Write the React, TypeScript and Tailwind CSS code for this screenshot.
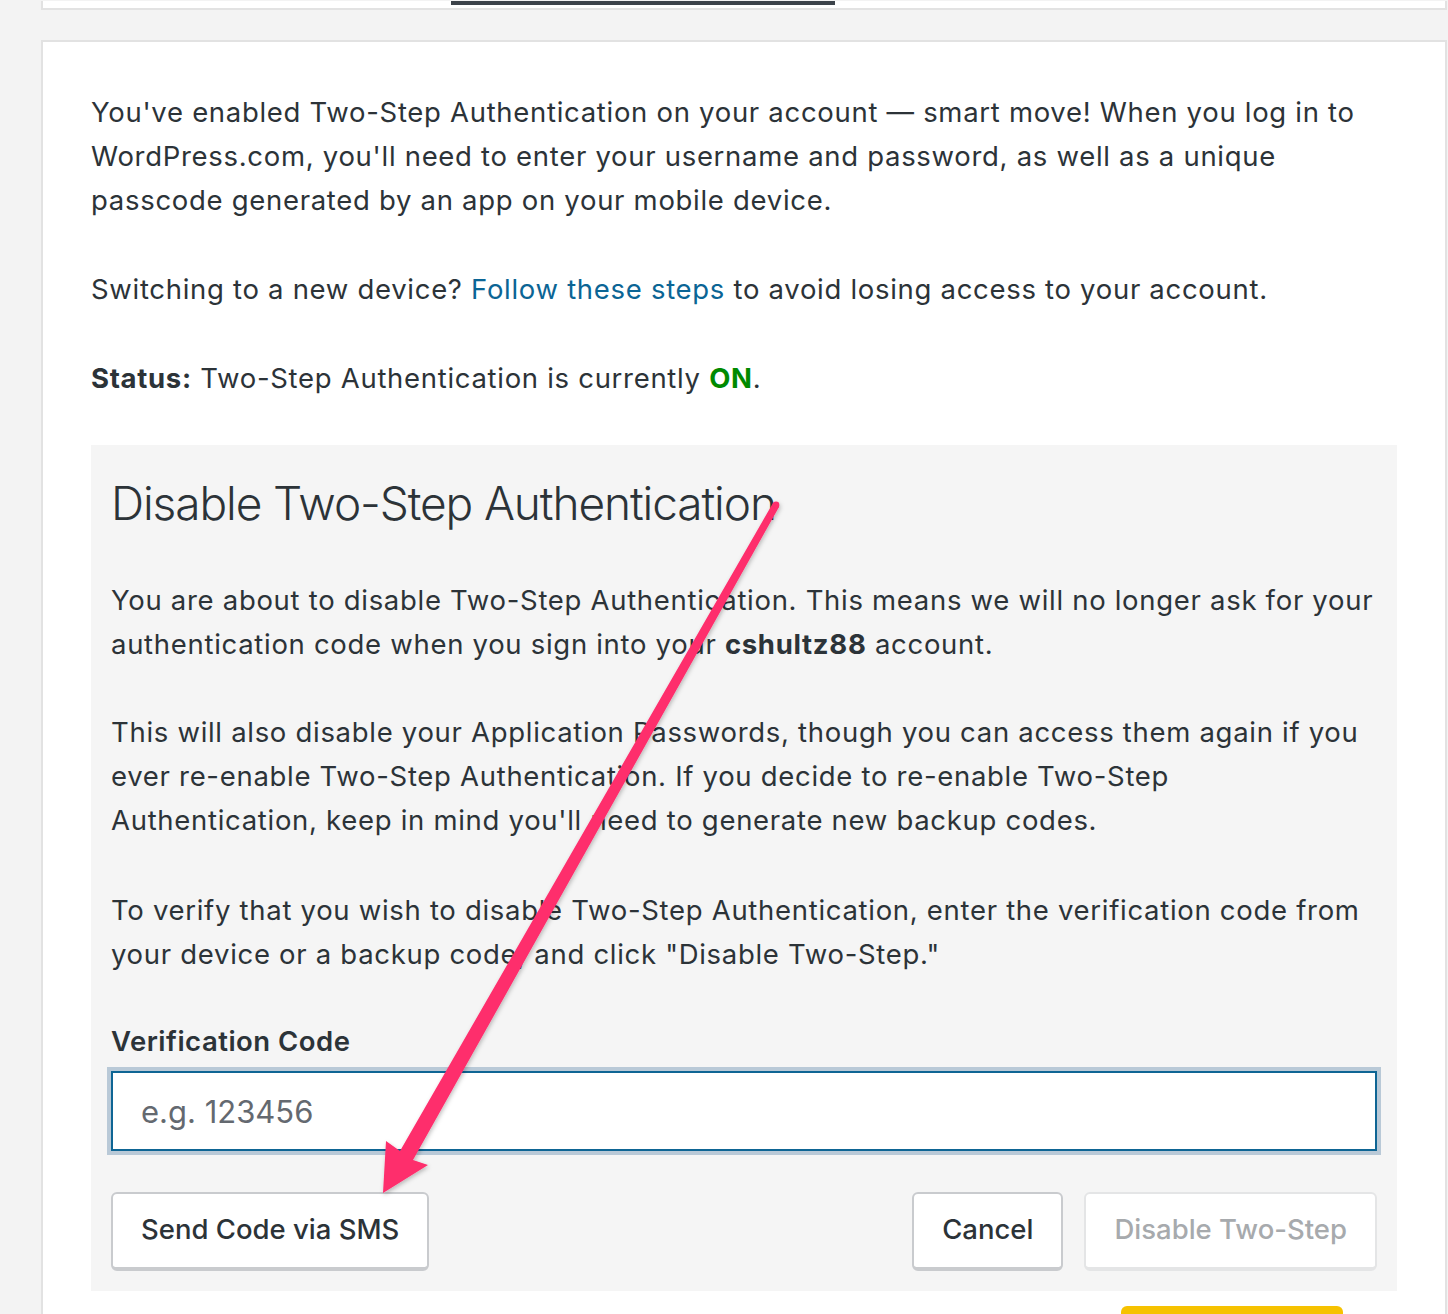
import React from "react";

const Arrow = () => (
  <svg
    className="absolute inset-0 pointer-events-none"
    width="1448"
    height="1314"
    viewBox="0 0 1448 1314"
  >
    <defs>
      <filter id="arrowShadow" x="-10%" y="-10%" width="120%" height="120%">
        <feDropShadow dx="1" dy="2" stdDeviation="2" floodColor="#000" floodOpacity="0.25" />
      </filter>
    </defs>
    <g filter="url(#arrowShadow)" fill="#fe2d6c">
      <polygon points="773,503 779,507 413,1160 428,1165 383,1193 386,1141 400,1151" />
      <circle cx="776" cy="505" r="3.4" />
    </g>
  </svg>
);

const App = () => {
  return (
    <div className="relative min-h-[1314px] overflow-hidden bg-[#f3f3f3] font-['Inter','Liberation_Sans',sans-serif] text-[#2c3338]">
      {/* tab bar card, scrolled mostly out of view */}
      <div className="ml-[41px] mr-[1px] h-[9px] border-x-2 border-b-2 border-[#e2e2e2] bg-white">
        <div className="ml-[408px] mt-[1px] h-[4px] w-[384px] bg-[#3c434a]" />
      </div>

      <div className="ml-[41px] mr-[1px] mt-[30px] border-2 border-[#e2e2e2] bg-white px-[48px] pt-[48px]">
        <div className="text-[27.5px] leading-[44px] tracking-[0.7px]">
          <p className="mb-[45px]">
            You've enabled Two-Step Authentication on your account — smart move! When you log in to
            WordPress.com, you'll need to enter your username and password, as well as a unique
            passcode generated by an app on your mobile device.
          </p>
          <p className="mb-[45px]">
            Switching to a new device? <a className="text-[#0b6595]">Follow these steps</a> to avoid
            losing access to your account.
          </p>
          <p className="mb-[45px]">
            <strong className="font-bold">Status:</strong> Two-Step Authentication is currently{" "}
            <strong className="font-bold text-[#008a00]">ON</strong>.
          </p>
        </div>

        <div className="bg-[#f5f5f5] px-[20px] pt-[29px] pb-[20px]">
          <h2 className="mb-[46px] text-[46px] font-light leading-[58px] tracking-[-1.1px]">
            Disable Two-Step Authentication
          </h2>
          <div className="text-[27.5px] leading-[44px] tracking-[0.7px]">
            <p className="mb-[44px]">
              You are about to disable Two-Step Authentication. This means we will no longer ask for
              your authentication code when you sign into your{" "}
              <strong className="font-bold">cshultz88</strong> account.
            </p>
            <p className="mb-[46px]">
              This will also disable your Application Passwords, though you can access them again if
              you ever re-enable Two-Step Authentication. If you decide to re-enable Two-Step
              Authentication, keep in mind you'll need to generate new backup codes.
            </p>
            <p className="mb-[43px]">
              To verify that you wish to disable Two-Step Authentication, enter the verification code
              from your device or a backup code, and click "Disable Two-Step."
            </p>
          </div>

          <label className="block text-[27.5px] font-semibold leading-[44px] tracking-[0.5px]">
            Verification Code
          </label>
          <input
            className="mt-[8px] block h-[80px] w-full border-2 border-[#0e6594] bg-white px-[28px] text-[31px] text-[#2c3338] shadow-[0_0_0_4px_#b9c9d7] outline-none placeholder:text-[#646970]"
            placeholder="e.g. 123456"
          />

          <div className="mt-[41px] flex items-center">
            <button className="h-[79px] rounded-[6px] border-2 border-b-[4px] border-[#c9cbce] bg-white px-[28px] pb-[2px] text-[27.5px] font-medium text-[#2c3338]">
              Send Code via SMS
            </button>
            <div className="ml-auto flex gap-[21px]">
              <button className="h-[79px] rounded-[6px] border-2 border-b-[4px] border-[#c9cbce] bg-white px-[28px] pb-[2px] text-[27.5px] font-medium text-[#2c3338]">
                Cancel
              </button>
              <button className="h-[79px] rounded-[6px] border-2 border-b-[4px] border-[#e4e5e6] bg-white px-[28px] pb-[2px] text-[27.5px] font-medium text-[#a7aaad]">
                Disable Two-Step
              </button>
            </div>
          </div>
        </div>

        <div className="mt-[15px] flex justify-end pr-[54px]">
          <div className="h-[40px] w-[222px] rounded-t-[6px] bg-[#f6c200]" />
        </div>
      </div>

      <Arrow />
    </div>
  );
};

export default App;
